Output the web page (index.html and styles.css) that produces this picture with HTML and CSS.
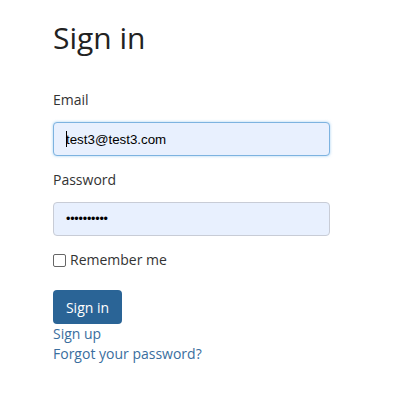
FILE: index.html
```html
<!DOCTYPE html>
<html>
<head>
<meta charset="utf-8">
<link rel="stylesheet" href="styles.css">
</head>
<body>
<main class="page">
  <h2 class="title">Sign in</h2>
  <form class="form">
    <div class="field">
      <label class="label">Email</label>
      <div class="input input-focus"><span class="caret"></span>test3@test3.com</div>
    </div>
    <div class="field">
      <label class="label">Password</label>
      <div class="input input-pw">••••••••••</div>
    </div>
    <div class="check">
      <span class="box"></span>
      <span class="check-label">Remember me</span>
    </div>
    <div class="actions">
      <button type="button" class="btn">Sign in</button>
    </div>
  </form>
  <div class="links">
    <a class="link">Sign up</a>
    <a class="link">Forgot your password?</a>
  </div>
</main>
</body>
</html>
```
FILE: styles.css
```css
html, body {
  margin: 0;
  padding: 0;
  background: #fff;
}
body {
  font-family: "Open Sans", "Liberation Sans", sans-serif;
  color: #333;
  font-size: 14px;
}
.page {
  padding: 18px 0 0 53px;
  width: 277px;
}
.title {
  margin: 0;
  font-size: 30px;
  font-weight: 400;
  line-height: 40px;
  color: #222;
}
.form {
  margin-top: 32px;
}
.field {
  display: flex;
  flex-direction: column;
  margin-bottom: 14px;
}
.label {
  font-size: 14px;
  line-height: 20px;
  margin-bottom: 12px;
}
.input {
  box-sizing: border-box;
  height: 34px;
  border: 1px solid #c8ccd6;
  border-radius: 4px;
  background: #e8f0fe;
  font-family: "Liberation Sans", Arial, sans-serif;
  font-size: 13.33px;
  color: #000;
  padding: 0 12px;
  display: flex;
  align-items: center;
}
.input-focus {
  border-color: #7db3e0;
  box-shadow: 0 0 3px rgba(102, 175, 233, 0.6);
}
.caret {
  display: inline-block;
  width: 1px;
  height: 16px;
  background: #000;
  margin-right: -1px;
}
.input-pw {
  font-size: 12.5px;
  letter-spacing: -0.2px;
}
.check {
  display: flex;
  align-items: center;
  gap: 4px;
  margin-top: 4px;
}
.box {
  box-sizing: border-box;
  width: 13px;
  height: 13px;
  border: 1px solid #666;
  border-radius: 2px;
  background: #fff;
}
.check-label {
  font-size: 14px;
  line-height: 20px;
}
.actions {
  margin-top: 20px;
}
.btn {
  box-sizing: border-box;
  height: 34px;
  width: 69px;
  border: none;
  border-radius: 4px;
  background: #2a6496;
  color: #fff;
  font-family: "Open Sans", sans-serif;
  font-size: 14px;
  padding: 0;
}
.links {
  display: flex;
  flex-direction: column;
  align-items: flex-start;
}
.link {
  color: #3a6e9e;
  font-size: 14px;
  line-height: 20px;
}
```
